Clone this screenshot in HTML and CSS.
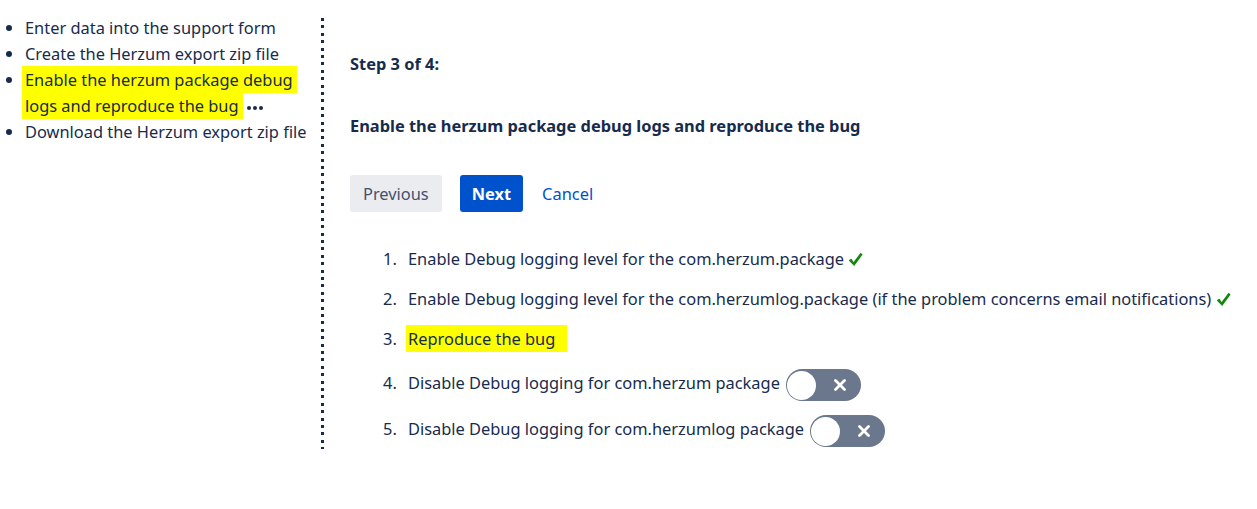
FILE: index.html
```html
<!DOCTYPE html>
<html lang="en">
<head>
<meta charset="utf-8">
<title>Herzum support wizard</title>
<link rel="stylesheet" href="styles.css">
</head>
<body>
<div class="page">
  <aside class="side">
    <ul class="steps">
      <li>Enter data into the support form</li>
      <li>Create the Herzum export zip file</li>
      <li><span class="hl hl-side">Enable the herzum package debug logs and reproduce the bug</span><svg class="more" width="18" height="6" viewBox="0 0 18 6"><circle cx="3" cy="3" r="2"/><circle cx="9" cy="3" r="2"/><circle cx="15" cy="3" r="2"/></svg></li>
      <li>Download the Herzum export zip file</li>
    </ul>
  </aside>
  <div class="divider"></div>
  <main class="content">
    <p class="step">Step 3 of 4:</p>
    <h2 class="title">Enable the herzum package debug logs and reproduce the bug</h2>
    <div class="actions">
      <button class="btn btn-default">Previous</button>
      <button class="btn btn-primary">Next</button>
      <button class="btn btn-link">Cancel</button>
    </div>
    <ol class="tasks">
      <li>Enable Debug logging level for the com.herzum.package <svg class="check" width="15" height="15" viewBox="0 0 15 15"><path d="M0.8 8.6 L3.2 6.6 L5.6 10 L12.6 0.8 L14.6 2.4 L6.2 14 Z"/></svg></li>
      <li>Enable Debug logging level for the com.herzumlog.package (if the problem concerns email notifications) <svg class="check" width="15" height="15" viewBox="0 0 15 15"><path d="M0.8 8.6 L3.2 6.6 L5.6 10 L12.6 0.8 L14.6 2.4 L6.2 14 Z"/></svg></li>
      <li class="before-toggle"><span class="hl hl-task">Reproduce the bug</span></li>
      <li class="with-toggle">Disable Debug logging for com.herzum package <span class="toggle"><span class="knob"></span><svg class="x" width="12" height="12" viewBox="0 0 12 12"><path d="M1.5 1.5 L10.5 10.5 M10.5 1.5 L1.5 10.5"/></svg></span></li>
      <li class="with-toggle">Disable Debug logging for com.herzumlog package <span class="toggle"><span class="knob"></span><svg class="x" width="12" height="12" viewBox="0 0 12 12"><path d="M1.5 1.5 L10.5 10.5 M10.5 1.5 L1.5 10.5"/></svg></span></li>
    </ol>
  </main>
</div>
</body>
</html>
```
FILE: styles.css
```css
* { box-sizing: border-box; }
body {
  margin: 0;
  background: #fff;
  color: #172b4d;
  font-family: "Noto Sans", "Open Sans", sans-serif;
  font-size: 16.4px;
  line-height: 26px;
}
.page {
  display: flex;
  align-items: flex-start;
}
.side {
  width: 321px;
  padding-top: 15px;
}
.steps {
  margin: 0;
  padding-left: 25px;
  width: 313px;
}
.steps li { margin: 0; }
.hl {
  background: #ffff00;
  -webkit-box-decoration-break: clone;
  box-decoration-break: clone;
}
.hl-side { padding: 2px 4px 2px 3px; margin-left: -3px; }
.hl-task { padding: 2px 12px 2px 2px; margin-left: -2px; }
.more {
  fill: #172b4d;
  margin-left: 3px;
  vertical-align: middle;
}
.divider {
  width: 3px;
  height: 431px;
  margin-top: 18px;
  background: repeating-linear-gradient(to bottom, #172b4d 0, #172b4d 3px, transparent 3px, transparent 7.4px);
}
.content {
  margin-left: 26px;
  padding-top: 51px;
}
.step, .title {
  margin: 0;
  font-size: 16.4px;
  font-weight: 700;
  line-height: 26px;
}
.title { margin-top: 36px; }
.actions {
  display: flex;
  align-items: center;
  margin-top: 36px;
}
.btn {
  height: 37px;
  border: 0;
  border-radius: 3px;
  font-family: inherit;
  font-size: 16.4px;
  line-height: 37px;
  cursor: pointer;
}
.btn-default { background: #ebecf0; color: #42526e; padding: 0 13px; }
.btn-primary { background: #0052cc; color: #fff; font-weight: 700; padding: 0 12px; margin-left: 18px; }
.btn-link { background: transparent; color: #0052cc; padding: 0; margin-left: 19px; }
.tasks {
  margin: 34px 0 0;
  padding-left: 58px;
  list-style: none;
  counter-reset: task;
}
.tasks li {
  margin-bottom: 14px;
  counter-increment: task;
}
.tasks li::before {
  content: counter(task) ".";
  display: inline-block;
  width: 25px;
  margin-left: -25px;
}
.tasks li.before-toggle { margin-bottom: 17px; }
.tasks li.with-toggle { margin-bottom: 14px; }
.check {
  fill: #12880e;
  vertical-align: -2px;
}
.toggle {
  position: relative;
  display: inline-block;
  width: 75px;
  height: 32px;
  margin-left: 2px;
  border-radius: 16px;
  background: #6b778c;
  vertical-align: middle;
}
.knob {
  position: absolute;
  left: 1px;
  top: 1.5px;
  width: 29px;
  height: 29px;
  border-radius: 50%;
  background: #fff;
}
.x {
  position: absolute;
  left: 48px;
  top: 10px;
  stroke: #fff;
  stroke-width: 2.8;
  stroke-linecap: round;
  fill: none;
}
```
